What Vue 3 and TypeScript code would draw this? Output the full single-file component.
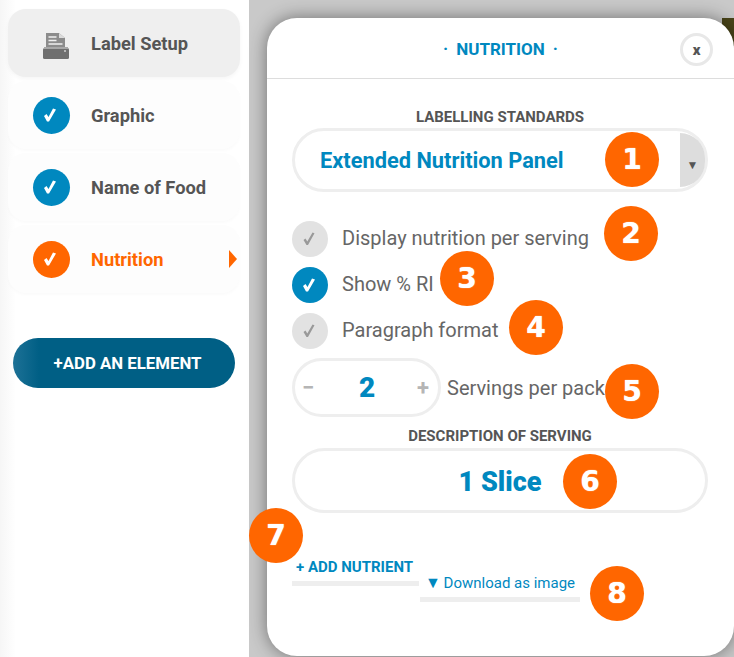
<template>
  <div class="screen">
    <aside class="sidebar">
      <div
        v-for="step in steps"
        :key="step.name"
        class="step"
        :class="{ current: step.kind === 'setup', active: step.kind === 'active' }"
      >
        <span class="step-icon">
          <svg v-if="step.kind === 'setup'" width="28" height="28" viewBox="0 0 28 28">
            <path d="M4 1h13l6 5v9H4z" fill="#8c8c8c" />
            <path d="M17 1v5h6z" fill="#dcdcdc" />
            <path d="M6.500 5h8M6.500 8.500h8M6.500 12h14" stroke="#efefef" stroke-width="1.400" />
            <rect x="1" y="16" width="26" height="11" rx="1.500" fill="#6f6f6f" />
            <rect x="2" y="15" width="24" height="2" fill="#a8a8a8" />
            <circle cx="23" cy="19" r="1" fill="#cfcfcf" />
          </svg>
          <svg v-else class="check" width="16" height="16" viewBox="0 0 16 16">
            <path d="M2 9 4.500 7 6.500 10 11 1.500 14 2.500 7 14.500H5z" fill="#fff" />
          </svg>
        </span>
        <span class="step-name">{{ step.name }}</span>
        <span v-if="step.kind === 'active'" class="step-arrow" />
      </div>
      <button class="add-element">+ADD AN ELEMENT</button>
    </aside>

    <main class="stage">
      <span class="corner" />
      <section class="modal">
        <header class="modal-head">
          <h1 class="modal-title"><span>·</span>NUTRITION<span>·</span></h1>
          <span class="close">x</span>
        </header>

        <div class="modal-body">
          <h2 class="field-title">LABELLING STANDARDS</h2>
          <div class="select">
            <span class="select-value">Extended Nutrition Panel</span>
            <span class="select-arrow">▼</span>
            <span class="badge b1">1</span>
          </div>

          <div class="options">
            <div v-for="opt in options" :key="opt.label" class="option">
              <span class="tick" :class="{ on: opt.on }">
                <svg class="check" width="16" height="16" viewBox="0 0 16 16">
                  <path
                    v-if="opt.on"
                    d="M2 9 4.500 7 6.500 10 11 1.500 14 2.500 7 14.500H5z"
                    fill="#fff"
                  />
                  <path v-else d="M2.500 9 4.500 7.500 6.300 10.500 11.500 1.500 13.500 2.200 7 14H5.500z" fill="#999" />
                </svg>
              </span>
              <span class="option-label">{{ opt.label }}</span>
              <span class="badge" :class="opt.badgeClass">{{ opt.badge }}</span>
            </div>
          </div>

          <div class="servings">
            <div class="stepper">
              <span class="stepper-btn">−</span>
              <span class="stepper-value">2</span>
              <span class="stepper-btn">+</span>
            </div>
            <span class="option-label">Servings per pack</span>
            <span class="badge b5">5</span>
          </div>

          <h2 class="field-title second">DESCRIPTION OF SERVING</h2>
          <div class="serving-desc">
            1 Slice
            <span class="badge b6">6</span>
          </div>

          <div class="links">
            <a class="add-nutrient">+ ADD NUTRIENT<span class="badge b7">7</span></a>
            <a class="download"><span class="down">▼</span> Download as image<span class="badge b8">8</span></a>
          </div>
        </div>
      </section>
    </main>
  </div>
</template>

<script setup lang="ts">
interface Step {
  name: string;
  kind: "setup" | "done" | "active";
}

interface Option {
  label: string;
  on: boolean;
  badge: number;
  badgeClass: string;
}

const steps: Step[] = [
  { name: "Label Setup", kind: "setup" },
  { name: "Graphic", kind: "done" },
  { name: "Name of Food", kind: "done" },
  { name: "Nutrition", kind: "active" },
];

const options: Option[] = [
  { label: "Display nutrition per serving", on: false, badge: 2, badgeClass: "b2" },
  { label: "Show % RI", on: true, badge: 3, badgeClass: "b3" },
  { label: "Paragraph format", on: false, badge: 4, badgeClass: "b4" },
];
</script>

<style scoped>
.screen {
  display: flex;
  width: 734px;
  height: 657px;
  overflow: hidden;
  font-family: Roboto, "Liberation Sans", sans-serif;
  background: #c9c9c9;
}

.sidebar {
  width: 249px;
  flex-shrink: 0;
  box-sizing: border-box;
  padding: 9px 9px 0 8px;
  background: linear-gradient(90deg, #f6f6f6, #fff 16px);
}

.step {
  display: flex;
  align-items: center;
  height: 68px;
  margin-bottom: 4px;
  padding-left: 25px;
  border-radius: 18px;
  background: #fdfdfd;
  box-shadow: 0 2px 3px rgba(0, 0, 0, 0.02);
  position: relative;
}

.step.current {
  background: #efefef;
  box-shadow: 0 2px 4px rgba(0, 0, 0, 0.04);
}

.step-icon {
  width: 37px;
  height: 37px;
  border-radius: 50%;
  background: #0088bf;
  display: flex;
  align-items: center;
  justify-content: center;
}

.check {
  margin-right: 3px;
}

.step.current .step-icon {
  background: none;
  justify-content: flex-end;
  padding-top: 5px;
  box-sizing: border-box;
}

.step.active .step-icon {
  background: #ff6600;
}

.step-name {
  margin-left: 21px;
  font-size: 18.3px;
  font-weight: 700;
  color: #555;
}

.step.active .step-name {
  color: #ff6600;
}

.step-arrow {
  position: absolute;
  right: 3px;
  top: 25px;
  border-left: 8px solid #ff6600;
  border-top: 9px solid transparent;
  border-bottom: 9px solid transparent;
}

.add-element {
  display: block;
  width: 222px;
  height: 50px;
  margin: 45px 0 0 5px;
  padding: 0 0 0 7px;
  border: none;
  border-radius: 25px;
  background: linear-gradient(90deg, #1d7196, #005f85 26px);
  color: #fff;
  font-family: inherit;
  font-size: 16.8px;
  font-weight: 700;
}

.stage {
  flex: 1;
  position: relative;
  padding: 18px 0 0 18px;
  min-width: 0;
}

.corner {
  position: absolute;
  right: 0;
  top: 18px;
  width: 12px;
  height: 28px;
  background: #4a4519;
}

.modal {
  position: relative;
  height: 638px;
  border-radius: 30px;
  background: #fff;
  box-shadow: 0 0 18px rgba(0, 0, 0, 0.45);
}

.modal-head {
  position: relative;
  display: flex;
  align-items: center;
  justify-content: center;
  height: 60px;
  border-bottom: 1px solid #ddd;
}

.modal-title {
  display: flex;
  gap: 8px;
  margin: 2px 0 0;
  font-size: 17px;
  font-weight: 700;
  color: #0088bf;
}

.close {
  position: absolute;
  left: 413px;
  top: 15px;
  width: 33px;
  height: 33px;
  box-sizing: border-box;
  border: 3px solid #e8e8e8;
  border-radius: 50%;
  display: flex;
  align-items: center;
  justify-content: center;
  font-size: 15px;
  font-weight: 900;
  color: #555;
}

.modal-body {
  padding: 30px 26px 0 25px;
}

.field-title {
  margin: 0;
  height: 16px;
  line-height: 16px;
  text-align: center;
  font-size: 15px;
  font-weight: 700;
  color: #555;
}

.select {
  position: relative;
  display: flex;
  align-items: center;
  height: 64px;
  margin-top: 3px;
  box-sizing: border-box;
  border: 3px solid #eee;
  border-radius: 32px;
  overflow: visible;
}

.select-value {
  margin-left: 25px;
  font-size: 21.8px;
  font-weight: 700;
  color: #0088bf;
}

.select-arrow {
  position: absolute;
  right: 0;
  top: 2px;
  bottom: 2px;
  width: 25px;
  display: flex;
  align-items: center;
  justify-content: center;
  padding-top: 9px;
  box-sizing: border-box;
  border-radius: 0 29px 29px 0;
  background: #ddd;
  color: #555;
  font-size: 12px;
}

.options {
  display: flex;
  flex-direction: column;
  gap: 10px;
  margin-top: 29px;
}

.option {
  position: relative;
  display: flex;
  align-items: center;
  height: 36px;
}

.option .option-label {
  margin-bottom: 2px;
}

.tick {
  width: 36px;
  height: 36px;
  border-radius: 50%;
  background: #e2e2e2;
  display: flex;
  align-items: center;
  justify-content: center;
  margin-right: 14px;
}

.tick.on {
  background: #0088bf;
}

.option-label {
  font-size: 20px;
  color: #666;
}

.servings {
  position: relative;
  display: flex;
  align-items: center;
  gap: 6px;
  margin-top: 9px;
}

.stepper {
  display: flex;
  align-items: center;
  justify-content: space-between;
  box-sizing: border-box;
  width: 149px;
  height: 59px;
  padding: 0 9px 0 7px;
  border: 3px solid #eee;
  border-radius: 30px;
}

.stepper-btn {
  font-size: 22px;
  font-weight: 700;
  color: #b5b5b5;
}

.stepper-value {
  margin-left: 3px;
  font-size: 28px;
  font-weight: 900;
  color: #0088bf;
}

.field-title.second {
  margin-top: 11px;
}

.serving-desc {
  position: relative;
  height: 65px;
  margin-top: 4px;
  box-sizing: border-box;
  border: 3px solid #eee;
  border-radius: 33px;
  line-height: 62px;
  text-align: center;
  font-size: 27px;
  font-weight: 900;
  color: #0088bf;
}

.links {
  display: flex;
  align-items: flex-start;
  margin-top: 46px;
}

.add-nutrient,
.download {
  position: relative;
  display: block;
  box-sizing: border-box;
  border-bottom: 5px solid #eee;
  color: #0088bf;
}

.add-nutrient {
  width: 127px;
  height: 27px;
  padding-left: 4px;
  font-size: 15px;
  line-height: 16px;
  font-weight: 700;
}

.download {
  width: 160px;
  height: 27px;
  margin: 15px 0 0 1px;
  padding-left: 5px;
  font-size: 15px;
  line-height: 17px;
}

.download {
  border-bottom-width: 5px;
  height: 28px;
}

.down {
  font-size: 16px;
  margin-right: -1px;
}

.badge {
  position: absolute;
  width: 54px;
  height: 55px;
  border-radius: 50%;
  background: #ff6600;
  color: #fff;
  display: flex;
  align-items: center;
  justify-content: center;
  font-family: "DejaVu Sans", sans-serif;
  font-size: 28px;
  font-weight: 700;
  line-height: 1;
  text-shadow: 0 0 1px #fff;
}

.b1 { left: 310px; top: 1px; }
.b2 { left: 312px; top: -15px; }
.b3 { left: 148px; top: -16px; }
.b4 { left: 217px; top: -13px; }
.b5 { left: 313px; top: 6px; }
.b6 { left: 268px; top: 3px; }
.b7 { left: -43px; top: -51px; }
.b8 { left: 170px; top: -8px; }
</style>
